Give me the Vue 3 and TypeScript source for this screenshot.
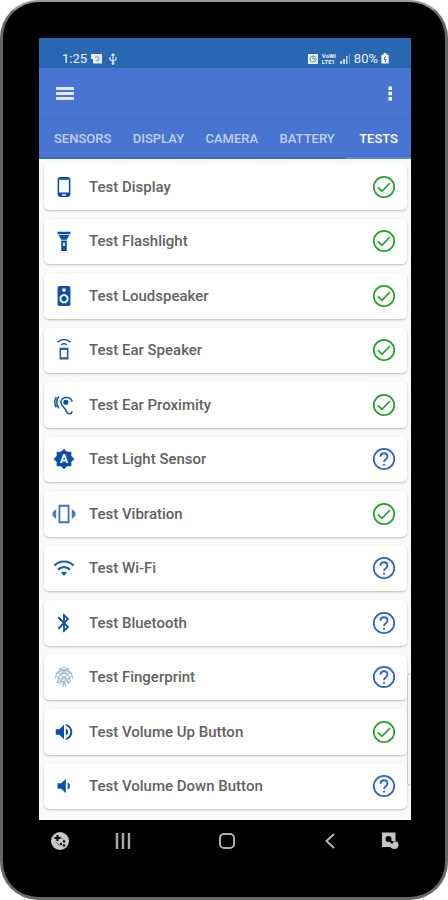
<script setup lang="ts">
import { ref } from 'vue'

type IconName =
  | 'phone' | 'flashlight' | 'speaker' | 'earSpeaker' | 'hearing' | 'brightness'
  | 'vibration' | 'wifi' | 'bluetooth' | 'fingerprint' | 'volumeUp' | 'volumeDown'

interface TestItem {
  label: string
  icon: IconName
  passed: boolean
}

const tabs: string[] = ['SENSORS', 'DISPLAY', 'CAMERA', 'BATTERY', 'TESTS']
const activeTab = ref('TESTS')

const tests: TestItem[] = [
  { label: 'Test Display', icon: 'phone', passed: true },
  { label: 'Test Flashlight', icon: 'flashlight', passed: true },
  { label: 'Test Loudspeaker', icon: 'speaker', passed: true },
  { label: 'Test Ear Speaker', icon: 'earSpeaker', passed: true },
  { label: 'Test Ear Proximity', icon: 'hearing', passed: true },
  { label: 'Test Light Sensor', icon: 'brightness', passed: false },
  { label: 'Test Vibration', icon: 'vibration', passed: true },
  { label: 'Test Wi-Fi', icon: 'wifi', passed: false },
  { label: 'Test Bluetooth', icon: 'bluetooth', passed: false },
  { label: 'Test Fingerprint', icon: 'fingerprint', passed: false },
  { label: 'Test Volume Up Button', icon: 'volumeUp', passed: true },
  { label: 'Test Volume Down Button', icon: 'volumeDown', passed: false },
]

// Filled shapes
const fills: Partial<Record<IconName, string>> = {
  phone: 'M16 1H8C6.34 1 5 2.34 5 4v16c0 1.66 1.34 3 3 3h8c1.66 0 3-1.34 3-3V4c0-1.66-1.34-3-3-3zm-2 20.500h-4v-1.500h4v1.500zm3.250-3.500H6.750V4h10.500v14z',
  flashlight: 'M9 10.500L6 5.500h12l-3 5H9zM18 4.500H5V2h14v2.500h-1zM9 23V11.500h6V23H9zm3-9.500a1 1 0 0 0-1 1v2a1 1 0 0 0 2 0v-2a1 1 0 0 0-1-1z',
  speaker: 'M17 1H7c-1.100 0-2 .9-2 2v18c0 1.100.9 2 2 2h10c1.100 0 2-.9 2-2V3c0-1.100-.9-2-2-2zm-5 2.500c1.100 0 2 .9 2 2s-.9 2-2 2-2-.9-2-2 .9-2 2-2zM12 20c-2.760 0-5-2.240-5-5s2.240-5 5-5 5 2.240 5 5-2.240 5-5 5zm0-8c-1.660 0-3 1.340-3 3s1.340 3 3 3 3-1.340 3-3-1.340-3-3-3z',
  brightness: 'M20 8.690V4h-4.690L12 .69 8.690 4H4v4.690L.69 12 4 15.310V20h4.690L12 23.310 15.310 20H20v-4.690L23.310 12 20 8.690z',
  vibration: 'M3.500 6.500v11L-.5 14v-4zM20.500 6.500v11l4-3.500v-4z',
  bluetooth: 'M17.710 7.710L12 2h-1v7.590L6.410 5 5 6.410 10.590 12 5 17.590 6.410 19 11 14.410V22h1l5.710-5.710-4.300-4.290 4.300-4.290zM13 5.830l1.880 1.880L13 9.590V5.830zm1.880 10.460L13 18.170v-3.760l1.880 1.880z',
  volumeUp: 'M3 9v6h4l5 5V4L7 9H3zm13.500 3c0-1.770-1.020-3.290-2.500-4.030v8.050c1.480-.73 2.500-2.250 2.500-4.020zM14 3.230v2.060c2.890.86 5 3.540 5 6.710s-2.110 5.850-5 6.710v2.060c4.010-.91 7-4.490 7-8.770s-2.990-7.860-7-8.770z',
  volumeDown: 'M18.500 12c0-1.770-1.020-3.290-2.500-4.030v8.050c1.480-.73 2.500-2.250 2.500-4.020zM5 9v6h4l5 5V4L9 9H5z',
}

// Outlined shapes
const strokes: Partial<Record<IconName, string>> = {
  earSpeaker: 'M8 10.500h8v11H8zM8 11.200h8M8 20.800h8M9 6.500a4.500 4.500 0 0 1 6 0M5 3.500a10 10 0 0 1 14 0',
  hearing: 'M21 8.500A6.500 6.500 0 0 0 8.500 8.500c0 3 1.500 4.500 3.200 6 1.600 1.400 2.300 2.500 3 4.500 1.200 3.600 5.300 3.200 6.300 0M6.500 2.500a10 10 0 0 0 0 13M3.500 3.500a11 11 0 0 0 0 11',
  vibration: 'M7 3h10v18H7z',
  wifi: 'M1.500 9.200a15 15 0 0 1 21 0M5.500 13.800a9.300 9.300 0 0 1 13 0',
  fingerprint: 'M6 3.500Q12 0 18 3.500M3 8.500Q12-1 21 8.500M2.500 14c0-12 19-12 19 0M4 18.500c3-2 1.500-4 2.500-6.500 2-5 9-5 11 0 .8 2 .2 4 2 5M7 21c3-3 2-5 3-8 .8-2 3.200-2 4 0 .8 3 1 4 3.500 6.500M10.500 23c2-3 2-6 1.500-9M14.500 22.500c-1-1-1.500-2-2-3.500M5 6l14 13M19 6L5 19M4 11l10 9M20 11l-10 9M8 3l8 6M16 3L8 9',
}
</script>

<template>
  <div class="device">
    <main class="screen">
      <header class="top">
        <div class="status">
          <div class="status-group">
            <span class="clock">1:25</span>
            <svg class="tiny" viewBox="0 0 12 12" fill="#e6effb" aria-hidden="true">
              <path d="M0 1h11v9.500H2V6H0z" />
              <path d="M4 4h4v3H6v2" fill="none" stroke="#6f98cf" />
            </svg>
            <svg class="tiny" viewBox="0 0 12 12" fill="none" stroke="#d5e3f6" stroke-width="1.300" aria-hidden="true">
              <path d="M6 1v10M3 4v2.500L6 8.500l3-2V4M4.500 2.500L6 1l1.500 1.500" />
              <circle cx="6" cy="10.500" r=".8" />
            </svg>
          </div>
          <div class="status-group right">
            <svg class="tiny" viewBox="0 0 12 12" aria-hidden="true">
              <path d="M1 1h10v10H1z" fill="#eef4fc" />
              <circle cx="6" cy="6" r="3" fill="none" stroke="#5f8cc8" />
              <path d="M6 4v2h2" fill="none" stroke="#5f8cc8" />
            </svg>
            <span class="network"><span>VoWi</span><span>LTE1</span></span>
            <svg class="tiny" viewBox="0 0 12 12" fill="#c5d7ef" aria-hidden="true">
              <path d="M1 8h2v3H1zM4 6h2v5H4zM7 3h1.500v8H7z" />
              <path d="M10 1h1v10h-1z" opacity=".5" />
            </svg>
            <span class="percent">80%</span>
            <svg class="battery" viewBox="0 0 8 12" aria-hidden="true">
              <path d="M2.500 0h3v2H8v9.500H0V2h2.500z" fill="#f4f8fd" />
              <path d="M4.500 3.500L3 7h2L4 10" fill="none" stroke="#46597a" />
            </svg>
          </div>
        </div>
        <div class="toolbar">
          <button class="icon-button" type="button" aria-label="Open menu">
            <svg viewBox="0 0 18 18" fill="none" stroke="#dfe7fb" stroke-width="2.800" aria-hidden="true">
              <path d="M0 4.500h18M0 9.500h18M0 14.500h18" />
            </svg>
          </button>
          <button class="icon-button" type="button" aria-label="More options">
            <svg viewBox="0 0 18 18" fill="#fff" aria-hidden="true">
              <path d="M7.500 2.500H11v3.400H7.500zM7.500 7.800H11v3.400H7.500zM7.500 13.100H11v3.400H7.500z" />
            </svg>
          </button>
        </div>
        <nav class="tabs" role="tablist" aria-label="Sections">
          <button
            v-for="tab in tabs"
            :key="tab"
            class="tab"
            :class="{ active: tab === activeTab }"
            type="button"
            role="tab"
            :aria-selected="tab === activeTab"
            @click="activeTab = tab"
          >{{ tab }}</button>
        </nav>
      </header>

      <ul class="list">
        <li v-for="item in tests" :key="item.label" class="row">
          <button class="card" type="button">
            <svg class="lead" :class="item.icon" viewBox="0 0 24 24" aria-hidden="true">
              <path v-if="fills[item.icon]" class="fill" fill-rule="evenodd" :d="fills[item.icon]" />
              <path v-if="strokes[item.icon]" class="line" :d="strokes[item.icon]" />
              <circle v-if="item.icon === 'hearing'" class="fill" cx="14" cy="9" r="2.800" />
              <path v-if="item.icon === 'wifi'" class="fill" d="M8.800 17.200q3.200-2 6.400 0L12 20.500z" />
              <text v-if="item.icon === 'brightness'" class="auto" x="12" y="16.500" text-anchor="middle">A</text>
            </svg>
            <span class="label">{{ item.label }}</span>
            <svg class="result" :class="{ passed: item.passed }" viewBox="0 0 26 26" role="img" :aria-label="item.passed ? 'Passed' : 'Not tested'">
              <circle cx="13" cy="13" r="10.200" />
              <path v-if="item.passed" d="M7 13.300l4 4 8-8.300" />
              <template v-else>
                <path d="M9.500 10.700c0-4.600 7-4.600 7 0 0 2.400-3.500 2.600-3.500 5.300" />
                <path d="M13 17.700v2" />
              </template>
            </svg>
          </button>
        </li>
      </ul>
      <span class="scroll-thumb" aria-hidden="true"></span>
    </main>

    <nav class="navbar" aria-label="System navigation">
      <button class="nav-button" type="button" aria-label="Game tools">
        <svg viewBox="0 0 20 20" aria-hidden="true">
          <circle cx="10" cy="10" r="9" fill="#c9c9c9" />
          <path d="M7.500 4v6M4.500 7h6" stroke="#111" stroke-width="2.200" />
          <path d="M5.500 10.500l4.500 4.500M10 5.500l5 5" stroke="#555" stroke-width=".8" />
          <circle cx="11" cy="13" r="1.200" /><circle cx="14" cy="10.500" r="1.200" /><circle cx="14" cy="14.500" r="1.200" />
        </svg>
      </button>
      <div class="nav-main">
        <button class="nav-button" type="button" aria-label="Recent apps">
          <svg viewBox="0 0 20 20" fill="none" stroke="#aaa" stroke-width="2.400" aria-hidden="true">
            <path d="M4 2v16M10 2v16M16 2v16" />
          </svg>
        </button>
        <button class="nav-button" type="button" aria-label="Home">
          <svg viewBox="0 0 20 20" fill="none" stroke="#b0b0b0" stroke-width="2" aria-hidden="true">
            <rect x="3" y="3" width="14" height="14" rx="4" />
          </svg>
        </button>
        <button class="nav-button" type="button" aria-label="Back">
          <svg viewBox="0 0 20 20" fill="none" stroke="#b5b5b5" stroke-width="2" aria-hidden="true">
            <path d="M14 3l-7.500 7 7.500 7" />
          </svg>
        </button>
      </div>
      <button class="nav-button" type="button" aria-label="Screenshot">
        <svg viewBox="0 0 20 20" aria-hidden="true">
          <path d="M2 1.500h13.500v9H11v5.500H2z" fill="#c4c4c4" />
          <circle cx="8.500" cy="8" r="3" />
          <path d="M8.500 8l5 5" stroke="#000" stroke-width="2" />
          <path d="M10 14q0-2 2.500-1.500 1-2.500 4-2 2.500 1 2 4-.5 3.500-4 3.500-4.500 0-4.500-4z" fill="#c4c4c4" />
        </svg>
      </button>
    </nav>
  </div>
</template>

<style>
body {
  background: #fff;
}
</style>

<style scoped>
.device {
  box-sizing: border-box;
  min-height: 100vh;
  display: flex;
  flex-direction: column;
  padding: 36px 34px 36px 36px;
  background: #000;
  border: 3px solid #666;
  border-top: 2px solid #999;
  border-radius: 38px;
  font-family: Roboto, "Liberation Sans", sans-serif;
}

button {
  margin: 0;
  padding: 0;
  border: 0;
  background: none;
  font: inherit;
  cursor: pointer;
}

.screen {
  position: relative;
  flex: 1;
  display: flex;
  flex-direction: column;
  background: #f9f9f9;
}

.top {
  background: #4874d2;
}

.status {
  display: flex;
  align-items: center;
  justify-content: space-between;
  height: 30px;
  padding: 11px 22px 0 23px;
  box-sizing: border-box;
  background: #2867b2;
  color: #eaf2fc;
}

.status-group {
  display: flex;
  align-items: center;
  gap: 4px;
}

.status-group.right {
  gap: 3px;
}

.clock,
.percent {
  font-size: 13px;
  line-height: 20px;
}

.tiny {
  width: 12px;
  height: 12px;
}

.battery {
  width: 8px;
  height: 11px;
}

.network {
  display: flex;
  flex-direction: column;
  font-size: 6px;
  font-weight: 700;
  line-height: 6px;
}

.toolbar {
  display: flex;
  align-items: center;
  justify-content: space-between;
  height: 51px;
  padding: 0 12px 0 17px;
  box-sizing: border-box;
  border-bottom: 1px solid #426dca;
}

.icon-button {
  display: flex;
}

.icon-button svg {
  width: 18px;
  height: 18px;
}

.tabs {
  display: flex;
  justify-content: space-between;
  height: 40px;
  padding-left: 5px;
  box-shadow: inset 0 -2px #3e6ccd;
}

.tab {
  padding: 0 10px;
  color: #c3d0f2;
  font-size: 13px;
  font-weight: 500;
  line-height: 40px;
}

.tab.active {
  padding: 0 13px;
  color: #fff;
  box-shadow: inset 0 -2px #5d84dc;
}

.list {
  flex: 1;
  display: grid;
  grid-auto-rows: minmax(45px, 1fr);
  gap: 9px;
  margin: 0;
  padding: 5px 4px 11px 5px;
  list-style: none;
}

.row {
  display: flex;
}

.card {
  flex: 1;
  display: flex;
  align-items: center;
  gap: 14px;
  padding: 0 10px 0 9px;
  border-radius: 5px;
  background: #fff;
  box-shadow: 0 1px 2px rgba(0, 0, 0, 0.24);
  text-align: left;
}

.lead {
  width: 22px;
  height: 22px;
  overflow: visible;
}

.fill {
  fill: #0b4fa8;
}

.line {
  fill: none;
  stroke: #1c5bb0;
  stroke-width: 1.7;
}

.wifi .line {
  stroke-width: 2.4;
}

.vibration .line {
  stroke: #3d70bd;
  stroke-width: 2;
}

.vibration .fill {
  fill: #4a79c0;
}

.fingerprint .line {
  stroke: #a3badf;
  stroke-width: 1.1;
}

.auto {
  fill: #fff;
  font-size: 13px;
  font-weight: 700;
}

.label {
  flex: 1;
  color: #626262;
  font-size: 15px;
  font-weight: 500;
  line-height: 20px;
}

.result {
  width: 26px;
  height: 26px;
  fill: none;
  stroke: #2b63cf;
  stroke-width: 1.8;
}

.result.passed {
  stroke: #22a42a;
}

.scroll-thumb {
  position: absolute;
  right: 0;
  bottom: 34px;
  width: 4px;
  height: 113px;
  box-sizing: border-box;
  border: 1px solid #ccc;
  border-right: 0;
  border-radius: 4px 0 0 4px;
  background: #f4f4f4;
}

.navbar {
  display: flex;
  align-items: center;
  padding: 11px 11px 10px;
}

.nav-main {
  flex: 1;
  display: flex;
  justify-content: space-between;
  padding: 0 40px 0 43px;
}

.nav-button {
  display: flex;
}

.nav-button svg {
  width: 20px;
  height: 20px;
}
</style>
